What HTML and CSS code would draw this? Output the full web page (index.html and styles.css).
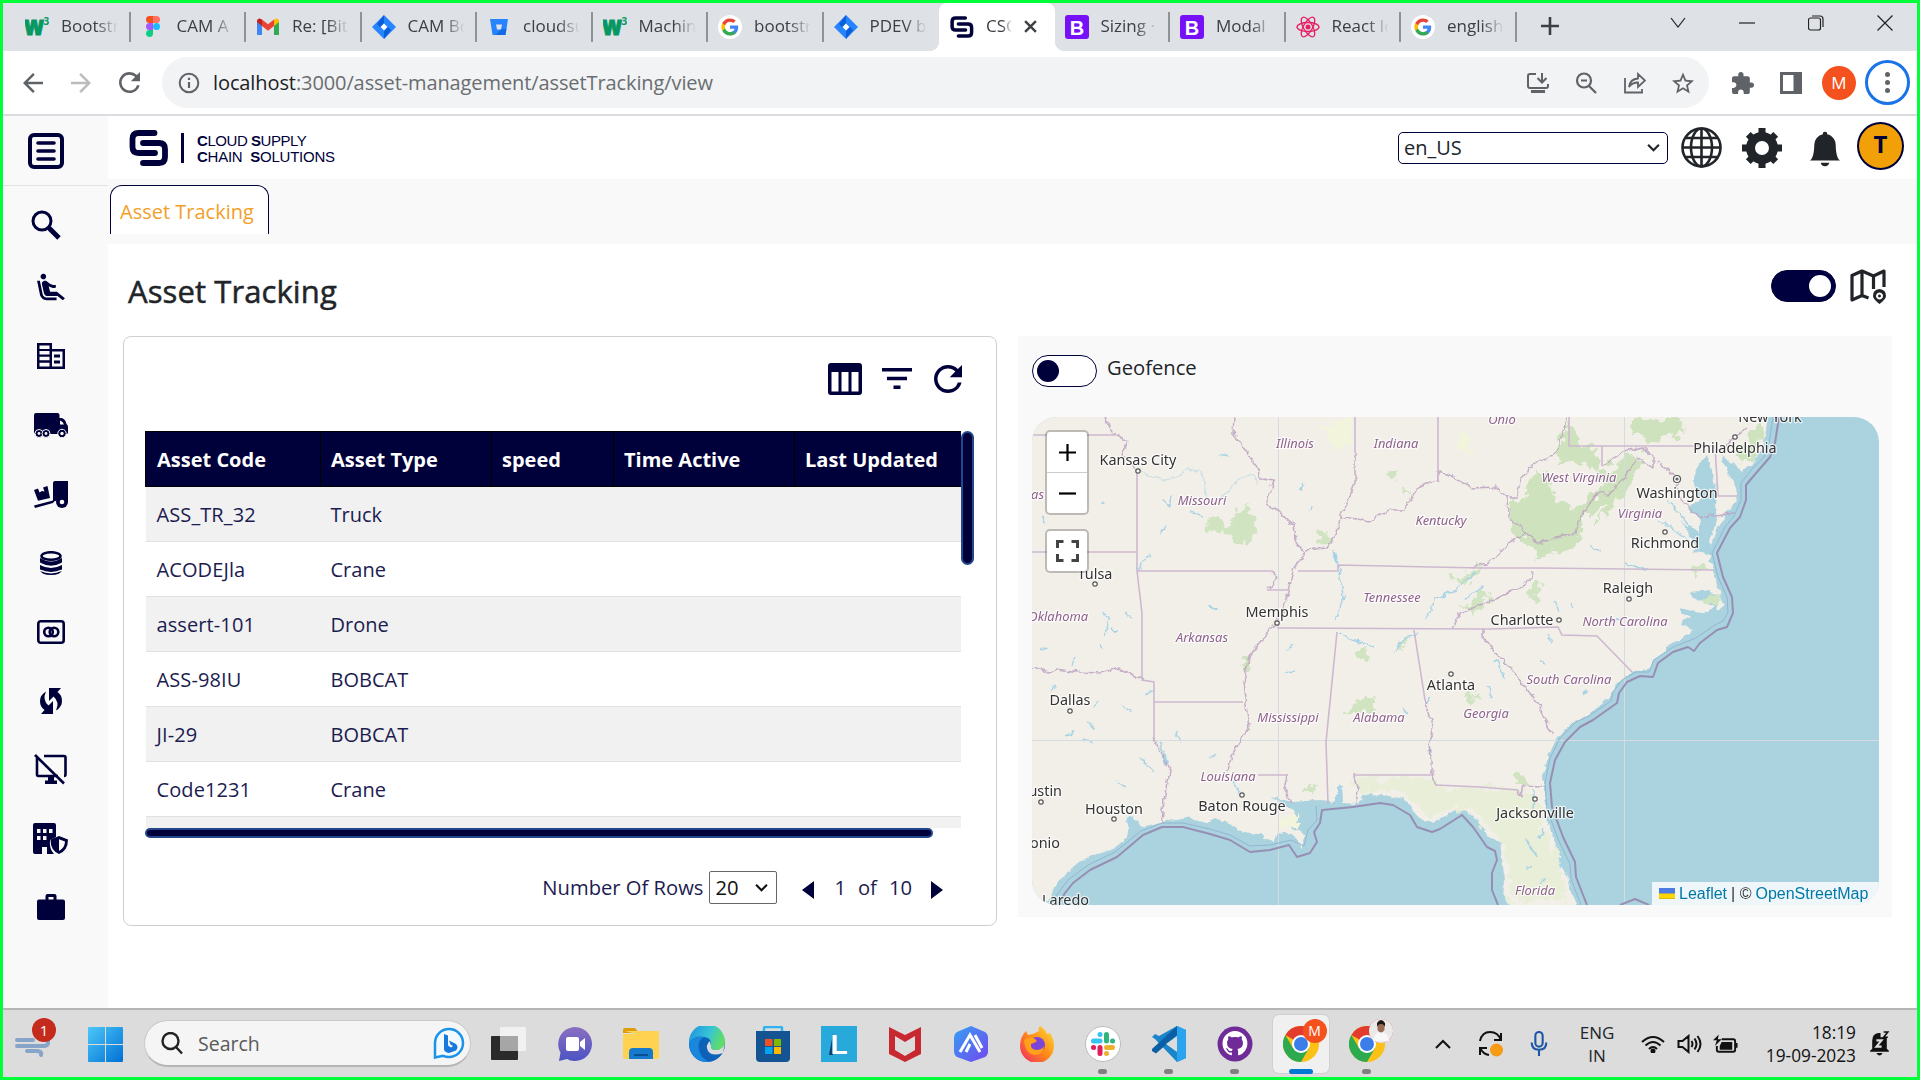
FILE: index.html
```html
<!DOCTYPE html>
<html lang="en">
<head>
<meta charset="utf-8">
<title>Asset Tracking</title>
<link rel="stylesheet" href="styles.css">
</head>
<body>
<svg class="defs" width="0" height="0">
  <defs>
    <symbol id="google" viewBox="0 0 24 24"><circle cx="12" cy="12" r="12" fill="#fff"/><g transform="translate(2.6 2.6) scale(.78)"><path fill="#4285F4" d="M22.56 12.25c0-.78-.07-1.53-.2-2.25H12v4.26h5.92a5.06 5.06 0 0 1-2.2 3.32v2.77h3.57c2.08-1.92 3.27-4.74 3.27-8.1z"/><path fill="#34A853" d="M12 23c2.97 0 5.46-.98 7.28-2.66l-3.57-2.77c-.98.66-2.23 1.06-3.71 1.06-2.86 0-5.29-1.93-6.16-4.53H2.18v2.84A11 11 0 0 0 12 23z"/><path fill="#FBBC05" d="M5.84 14.09a6.6 6.6 0 0 1 0-4.18V7.07H2.18a11 11 0 0 0 0 9.86l3.66-2.84z"/><path fill="#EA4335" d="M12 5.38c1.62 0 3.06.56 4.21 1.64l3.15-3.15C17.45 2.09 14.97 1 12 1A11 11 0 0 0 2.18 7.07l3.66 2.84c.87-2.6 3.3-4.53 6.16-4.53z"/></g></symbol>
    <symbol id="jira" viewBox="0 0 24 24"><path fill="#2684ff" d="M12 0 24 12 12 24 0 12z"/><path fill="#0052cc" d="M12 0v8l-4 4-3-3zM12 24v-8l4-4 3 3z" opacity=".75"/><path fill="#fff" d="m12 8.600 3.400 3.400-3.400 3.400L8.600 12z"/></symbol>
    <symbol id="w3" viewBox="0 0 24 24"><text class="w3-w" x="-1" y="20" textLength="20" lengthAdjust="spacingAndGlyphs">w</text><text class="w3-n" x="18.500" y="10">3</text></symbol>
    <symbol id="boot" viewBox="0 0 24 24"><rect width="24" height="24" rx="3" fill="#7510f7"/><text class="boot-b" x="12" y="19.500">B</text></symbol>
    <symbol id="cs" viewBox="0 0 40 36"><g fill="none" stroke-width="5.800" stroke-linejoin="round" stroke-linecap="round"><path d="M25.500 3H9.500q-6 0-6 6v8q0 6 6 6h16.500"/><path d="M14 13h16q6 0 6 6v8q0 6-6 6H14"/></g></symbol>
    <symbol id="refresh" viewBox="4 4 16 16"><path fill="currentColor" d="M17.650 6.350A7.958 7.958 0 0 0 12 4c-4.420 0-7.990 3.580-7.990 8s3.570 8 7.990 8c3.730 0 6.840-2.550 7.730-6h-2.080A5.990 5.990 0 0 1 12 18c-3.310 0-6-2.690-6-6s2.690-6 6-6c1.660 0 3.140.690 4.220 1.780L13 11h7V4l-2.350 2.350z"/></symbol>
    <symbol id="arrow" viewBox="4 4 16 16"><path fill="currentColor" d="M20 11H7.830l5.590-5.590L12 4l-8 8 8 8 1.410-1.410L7.830 13H20v-2z"/></symbol>
    <symbol id="chev" viewBox="0 0 12 8"><path d="m1 1.500 5 5 5-5" fill="none" stroke="currentColor" stroke-width="2"/></symbol>
    <symbol id="chrome" viewBox="0 0 36 36"><circle cx="18" cy="18" r="18" fill="#fbc116"/><path fill="#e33b2e" d="M18 18 2.400 9A18 18 0 0 1 33.600 9z"/><path fill="#2da94f" d="M2.400 9A18 18 0 0 0 18 36l7.800-13.500L18 18 10.200 22.500z"/><circle cx="18" cy="18" r="9" fill="#fff"/><circle cx="18" cy="18" r="7" fill="#3b7de9"/></symbol>
  </defs>
</svg>

<div class="screen">
  <header class="tabs">
    <div class="tab"><svg class="fav"><use href="#w3"/></svg><span>Bootstr</span></div>
    <div class="tab"><svg class="fav" viewBox="0 0 24 24"><path fill="#f24e1e" d="M12 1v7H8.500a3.500 3.500 0 0 1 0-7z"/><path fill="#ff7262" d="M12 1h3.500a3.500 3.500 0 0 1 0 7H12z"/><path fill="#a259ff" d="M12 8v7H8.500a3.500 3.500 0 0 1 0-7z"/><circle cx="15.500" cy="11.500" r="3.500" fill="#1abcfe"/><path fill="#0acf83" d="M12 15v4a3.500 3.500 0 1 1-3.500-4z"/></svg><span>CAM A</span></div>
    <div class="tab"><svg class="fav" viewBox="0 0 24 24"><path fill="#4285f4" d="M1 6v14h5V10z"/><path fill="#34a853" d="M23 6v14h-5V10z"/><path fill="#fbbc04" d="M18 4.500V11l5-4V5.500a2.500 2.500 0 0 0-4-1.500z"/><path fill="#c5221f" d="M6 4.500V11L1 7V5.500A2.500 2.500 0 0 1 5 4z"/><path fill="#ea4335" d="m6 4.500 6 4.800 6-4.800V11l-6 4.700L6 11z"/></svg><span>Re: [Bit</span></div>
    <div class="tab"><svg class="fav"><use href="#jira"/></svg><span>CAM Bo</span></div>
    <div class="tab"><svg class="fav" viewBox="0 0 24 24"><path fill="#2684ff" fill-rule="evenodd" d="M3 4h18l-2.500 16h-13zM9 9.500l1 5h4l1-5z"/><path fill="#0052cc" d="m14 14.500 5.500-1L18.500 20h-10z" opacity=".5"/></svg><span>cloudsu</span></div>
    <div class="tab"><svg class="fav"><use href="#w3"/></svg><span>Machin</span></div>
    <div class="tab"><svg class="fav"><use href="#google"/></svg><span>bootstr</span></div>
    <div class="tab before"><svg class="fav"><use href="#jira"/></svg><span>PDEV b</span></div>
    <div class="tab active"><svg class="fav navy"><use href="#cs"/></svg><span>CSC</span><svg class="tab-x" viewBox="0 0 12 12"><path d="m1 1 10 10M11 1 1 11" stroke="#3c4043" stroke-width="2.200"/></svg></div>
    <div class="tab"><svg class="fav"><use href="#boot"/></svg><span>Sizing ·</span></div>
    <div class="tab"><svg class="fav"><use href="#boot"/></svg><span>Modal</span></div>
    <div class="tab"><svg class="fav" viewBox="0 0 24 24"><g fill="none" stroke="#e91e63" stroke-width="1.300"><ellipse cx="12" cy="12" rx="11" ry="4.500"/><ellipse cx="12" cy="12" rx="11" ry="4.500" transform="rotate(60 12 12)"/><ellipse cx="12" cy="12" rx="11" ry="4.500" transform="rotate(120 12 12)"/></g><circle cx="12" cy="12" r="2.500" fill="#e91e63"/></svg><span>React Ic</span></div>
    <div class="tab"><svg class="fav"><use href="#google"/></svg><span>english</span></div>
    <svg class="newtab" viewBox="0 0 18 18"><path d="M9 0v18M0 9h18" stroke="#3c4043" stroke-width="2.600"/></svg>
    <div class="winctl">
      <svg viewBox="0 0 16 16"><path d="m1 3 7 9 7-9"/></svg>
      <svg viewBox="0 0 16 16"><path d="M0 8h16"/></svg>
      <svg viewBox="0 0 16 16"><rect x=".500" y="3" width="12" height="12" rx="2"/><path d="M4 1h8q3 0 3 3v8"/></svg>
      <svg viewBox="0 0 16 16"><path d="m.500.500 15 15M15.500.500l-15 15"/></svg>
    </div>
  </header>

  <div class="toolbar">
    <svg class="nav"><use href="#arrow"/></svg>
    <svg class="nav fwd"><use href="#arrow"/></svg>
    <svg class="nav reload"><use href="#refresh"/></svg>
    <div class="omnibox">
      <svg class="info" viewBox="0 0 22 22"><circle cx="11" cy="11" r="9.300" fill="none" stroke="#5f6368" stroke-width="2"/><path d="M11 10v6M11 5.800v2.200" stroke="#5f6368" stroke-width="2.200"/></svg>
      <div class="url"><b>localhost</b>:3000/asset-management/assetTracking/view</div>
      <svg viewBox="0 0 22 22"><g fill="none" stroke="#5f6368" stroke-width="2"><path d="M9 2H3q-2 0-2 2v10q0 2 2 2h16q2 0 2-2v-2M15 1v9m-4.500-4 4.500 4.500L19.500 6"/><path d="M4 19.500h14" stroke-width="3"/></g></svg>
      <svg viewBox="0 0 22 22"><g fill="none" stroke="#5f6368" stroke-width="2.200"><circle cx="9" cy="8.500" r="7"/><path d="m14 14 7 7M6 8.500h6"/></g></svg>
      <svg viewBox="0 0 22 22"><path d="M1 6v14.500h17V17M5 15q1-8 9-8.500V2l7 6.500-7 6.500v-4.500q-6 0-9 4.500z" fill="none" stroke="#5f6368" stroke-width="1.800"/></svg>
      <svg viewBox="2 2 20 19"><path fill="#5f6368" d="M22 9.240l-7.190-.620L12 2 9.190 8.630 2 9.240l5.460 4.730L5.820 21 12 17.270 18.180 21l-1.630-7.030L22 9.240zM12 15.400l-3.760 2.270 1-4.280-3.320-2.880 4.380-.380L12 6.100l1.710 4.040 4.380.380-3.320 2.880 1 4.280L12 15.400z"/></svg>
    </div>
    <svg class="ext" viewBox="2 1 21 21"><path fill="#5f6368" d="M20.500 11H19V7c0-1.100-.9-2-2-2h-4V3.500a2.500 2.500 0 0 0-5 0V5H4c-1.100 0-1.990.9-1.990 2v3.800H3.500c1.490 0 2.700 1.210 2.700 2.700s-1.210 2.700-2.700 2.700H2V20c0 1.100.9 2 2 2h3.800v-1.500c0-1.490 1.210-2.700 2.700-2.700s2.700 1.210 2.700 2.700V22H17c1.100 0 2-.9 2-2v-4h1.500a2.500 2.500 0 0 0 0-5z"/></svg>
    <svg class="panel-ic" viewBox="0 0 22 22"><path fill="#5f6368" fill-rule="evenodd" d="M0 0h22v22H0zM3 3v16h10.500V3z"/></svg>
    <div class="me">M</div>
    <div class="kebab"><i></i><i></i><i></i></div>
  </div>

  <div class="app">
    <nav class="side">
      <div class="side-top"><svg width="36" height="36" viewBox="0 0 36 36"><rect x="2" y="2" width="32" height="32" rx="4" fill="none" stroke="#00003a" stroke-width="4"/><path d="M10 10h16M10 18h16M10 26h16" stroke="#00003a" stroke-width="3.600" stroke-linecap="round"/></svg></div>
      <div class="side-search"><svg width="30" height="30" viewBox="0 0 30 30"><g fill="none" stroke="#00003a"><circle cx="11" cy="11" r="9" stroke-width="3"/><path d="m18 18 10 10" stroke-width="5"/></g></svg></div>
      <div class="side-ic"><svg width="32" height="30" viewBox="0.500 1 23 21"><path d="M5.350 5.640c-.9-.640-1.120-1.880-.490-2.790.630-.9 1.880-1.120 2.790-.490.9.640 1.120 1.880.490 2.790-.640.9-1.880 1.120-2.790.490zM16 19H8.930c-1.480 0-2.740-1.080-2.960-2.540L4 7H2l1.990 9.760C4.370 19.200 6.470 21 8.940 21H16v-2zm.230-4h-4.880l-1.030-4.100c1.580.890 3.280 1.540 5.150 1.220V9.990c-1.630.310-3.440-.270-4.690-1.250L9.140 7.470c-.230-.180-.490-.3-.760-.380a2.210 2.210 0 0 0-.990-.060h-.020a2.268 2.268 0 0 0-1.840 2.610l1.350 5.920A3.008 3.008 0 0 0 9.830 18h6.850l3.820 3 1.500-1.500-5.770-4.500z"/></svg></div>
      <div class="side-ic"><svg width="28" height="26" viewBox="0 0 28 26"><path fill-rule="evenodd" d="M0 0h15v6h13v20H0zM2.500 2.500V6h10V2.500zM2.500 8v3.500h10V8zm0 5.800v3.500h10v-3.500zm0 6v3.700h10v-3.700zM15 8.500v15h10.500v-15z"/><path d="M17 11.500h6v3h-6zm0 6h6v3h-6z"/></svg></div>
      <div class="side-ic"><svg width="34" height="25" viewBox="0 0 34 25"><path fill-rule="evenodd" d="M2 0h21.500q2 0 2 2v3h2q4 1 5 6 1.500 1 1.500 3v5.500q0 1.500-1.500 1.500H2Q0 21 0 19V2Q0 0 2 0zm24 7.500v4h4q-1-3-4-4z"/><g stroke="#f9f9f9" stroke-width="1"><circle cx="5" cy="20.500" r="4"/><circle cx="12" cy="20.500" r="4"/><circle cx="28" cy="20.500" r="4.200"/></g><circle cx="5" cy="20.500" r="1.400" fill="#f9f9f9"/><circle cx="12" cy="20.500" r="1.400" fill="#f9f9f9"/><circle cx="28" cy="20.500" r="1.700" fill="#f9f9f9"/></svg></div>
      <div class="side-ic"><svg width="34" height="27" viewBox="0 0 34 27"><path d="M19 2q0-2 2-2h13v21h-8q-5-3-7 1L1 27l-1-2.500 19-5z"/><path d="m0 9 4-1.500 1.500 4L8 10l2.500.500L9 6.500 13.500 5l2.500 12L4 19.800z"/><circle cx="28" cy="21" r="6"/><circle cx="28" cy="21" r="2.300" fill="#f9f9f9"/></svg></div>
      <div class="side-ic"><svg width="22" height="25" viewBox="0 0 22 25"><ellipse cx="11" cy="5" rx="9.500" ry="3.800" fill="none" stroke="#00003a" stroke-width="2.500"/><path d="M0 7q11 7 22 0v4q-1 4-11 4T0 11zM0 14q11 6 22 0v5q-1 5-11 5T0 19z"/><path d="M0 12.500q11 6 22 0M0 19.200q11 5 22 0" stroke="#f9f9f9" fill="none" stroke-width="1.500"/></svg></div>
      <div class="side-ic"><svg width="28" height="24" viewBox="0 0 28 24"><g fill="none" stroke="#00003a" stroke-width="2.600"><rect x="1.300" y="1.300" width="25.400" height="21.400" rx="2.500"/><circle cx="11.500" cy="12" r="4.300"/><circle cx="17" cy="12" r="4.300"/></g></svg></div>
      <div class="side-ic"><svg width="22" height="26" viewBox="0 0 22 26"><path d="M9 0h12l-3.500 4Q22 7 22 13q0 6-6 9.500Q20 14 13.500 8.500L9 13zM13 26H1l3.500-4Q0 19 0 13q0-6 6-9.500Q2 12 8.500 17.500L13 13z"/></svg></div>
      <div class="side-ic"><svg width="33" height="31" viewBox="0 0 33 31"><g fill="none" stroke="#00003a" stroke-width="2.600"><path d="M10 2h20q1.500 0 1.500 1.500v17Q31.500 22 30 22M3 4v16.500Q3 22 4.500 22H24"/><path d="m1 1 29 28.500"/></g><path d="M14 22h6v4.500h3V30H11v-3.500h3z"/></svg></div>
      <div class="side-ic"><svg width="35" height="31" viewBox="0 0 35 31"><path fill-rule="evenodd" d="M2 0h19q2 0 2 2v12l-6 3q-1 9 4 14h-7v-7H9v7H2q-2 0-2-2V2Q0 0 2 0zm2 6v4h3.500V6zm6 0v4h3.500V6zm6 0v4h3.500V6zM4 13v4h3.500v-4zm6 0v4h3.500v-4z"/><path fill-rule="evenodd" d="m26 13 9 3.500q0 11-9 14.500-8.500-3.500-8.500-14.500zm0 3.300V28q6-3.500 6-9.500z"/></svg></div>
      <div class="side-ic"><svg width="28" height="26" viewBox="0 0 28 26"><path fill-rule="evenodd" d="M8.500 5.500V2q0-2 2-2h7q2 0 2 2v3.500H26q2 0 2 2V24q0 2-2 2H2q-2 0-2-2V7.500q0-2 2-2zm3 0h5V3h-5z"/></svg></div>
    </nav>

    <main class="main">
      <div class="head">
        <svg class="logo"><use href="#cs"/></svg>
        <div class="logo-bar"></div>
        <div class="logo-text"><div class="l1"><b>C</b>LOUD <b>S</b>UPPLY</div><div class="l2"><b>C</b>HAIN&nbsp; <b>S</b>OLUTIONS</div></div>
        <div class="locale"><span>en_US</span><svg width="13" height="9"><use href="#chev"/></svg></div>
        <svg class="globe" viewBox="0 0 41 41"><g fill="none" stroke="#212529" stroke-width="2.600"><circle cx="20.500" cy="20.500" r="19"/><ellipse cx="20.500" cy="20.500" rx="10.500" ry="19"/><path d="M20.500 1.500v38M1.500 20.500h38M5 11h31M5 30h31"/></g></svg>
        <svg class="gear" viewBox="-20 -20 40 40"><g fill="none" stroke="#212529"><circle r="11.500" stroke-width="9"/><path d="M0-20v8M0 12v8M-20 0h8M12 0h8" stroke-width="7"/><path d="M0-20v8M0 12v8M-20 0h8M12 0h8" stroke-width="7" transform="rotate(45) scale(.97)"/></g></svg>
        <svg class="bell" viewBox="1 0 14 16"><path fill="#212529" d="M8 16a2 2 0 0 0 2-1.600H6A2 2 0 0 0 8 16zm.995-14.901a1 1 0 1 0-1.990 0A5.002 5.002 0 0 0 3 6c0 1.098-.100 6-2 7.400h14c-1.900-1.400-2-6.302-2-7.400 0-2.420-1.720-4.440-4.005-4.901z"/></svg>
        <div class="avatar">T</div>
      </div>
      <div class="crumbs"><div class="crumb">Asset Tracking</div></div>
      <div class="title-row">
        <h1>Asset Tracking</h1>
        <div class="switch on"><i></i></div>
        <svg class="mapic" viewBox="0 0 36 35"><g fill="none" stroke="#212529" stroke-width="3.200" stroke-linejoin="round"><path d="M34 18V2l-10.500 5L12 2 2 6.500V31l10-4.500 6.500 2.500M12 2v24M23.500 7v13"/></g><path fill="#212529" fill-rule="evenodd" d="M29.500 20q6.500.500 6.500 7 0 3-6.500 8-6.500-5-6.500-8 0-6.500 6.500-7zm0 3.500a3.500 3.500 0 1 0 .010 0zM29.500 25.500a1.500 1.500 0 1 1-.010 0z"/></svg>
      </div>
      <div class="cards">
        <section class="card">
          <div class="tools">
            <svg width="34" height="32" viewBox="0 0 34 32"><path fill="currentColor" fill-rule="evenodd" d="M3 0h28q3 0 3 3v26q0 3-3 3H3q-3 0-3-3V3q0-3 3-3zm.500 9v19.500h7V9zm10 0v19.500h7V9zm10 0v19.500h7V9z"/></svg>
            <svg width="30" height="21" viewBox="0 0 30 21"><path d="M0 1.800h30M5 10.500h20M11.500 19.300h7" stroke="currentColor" stroke-width="3.400"/></svg>
            <svg width="28" height="28"><use href="#refresh"/></svg>
          </div>
          <div class="scroll">
            <div class="viewport">
              <table>
                <colgroup><col class="c1"><col class="c2"><col class="c3"><col class="c4"><col class="c5"></colgroup>
                <thead><tr><th>Asset Code</th><th>Asset Type</th><th>speed</th><th>Time Active</th><th>Last Updated</th></tr></thead>
                <tbody>
                  <tr><td>ASS_TR_32</td><td>Truck</td><td></td><td></td><td></td></tr>
                  <tr><td>ACODEJla</td><td>Crane</td><td></td><td></td><td></td></tr>
                  <tr><td>assert-101</td><td>Drone</td><td></td><td></td><td></td></tr>
                  <tr><td>ASS-98IU</td><td>BOBCAT</td><td></td><td></td><td></td></tr>
                  <tr><td>JI-29</td><td>BOBCAT</td><td></td><td></td><td></td></tr>
                  <tr><td>Code1231</td><td>Crane</td><td></td><td></td><td></td></tr>
                  <tr><td></td><td></td><td></td><td></td><td></td></tr>
                </tbody>
              </table>
            </div>
            <div class="vbar"></div>
            <div class="hbar"></div>
          </div>
          <div class="pager">
            <span class="rows">Number Of Rows</span>
            <div class="rowsel"><span>20</span><svg width="13" height="9"><use href="#chev"/></svg></div>
            <svg class="prev" width="12" height="18" viewBox="0 0 12 18"><path d="M12 0v18L0 9z"/></svg>
            <span class="p1">1</span><span class="p2">of</span><span class="p3">10</span>
            <svg class="next" width="12" height="18" viewBox="0 0 12 18"><path d="M0 0v18l12-9z"/></svg>
          </div>
        </section>

        <section class="geo">
          <div class="geo-head"><div class="switch"><i></i></div><span>Geofence</span></div>
          <div class="map">
            <svg class="map-svg" viewBox="1032 417 847 488">
              <defs>
                <filter id="rough" x="-5%" y="-5%" width="110%" height="110%"><feTurbulence type="fractalNoise" baseFrequency=".12" numOctaves="3" seed="4"/><feDisplacementMap in="SourceGraphic" scale="7" xChannelSelector="R" yChannelSelector="G"/></filter>
                <filter id="wood" x="-10%" y="-10%" width="120%" height="120%"><feTurbulence type="fractalNoise" baseFrequency=".09" numOctaves="4" seed="9"/><feDisplacementMap in="SourceGraphic" scale="22" xChannelSelector="R" yChannelSelector="G"/></filter>
              </defs>
              <rect x="1032" y="417" width="847" height="488" fill="#aad3df"/>
              <path filter="url(#rough)" fill="#f2efe9" d="M1020 405H1770L1768 417 1763 447 1753 463 1742 473 1740 467 1730 463 1722 455 1727 470 1735 483 1738 497 1727 513 1718 527 1712 545 1709 540 1717 520 1715 503 1717 490 1712 470 1707 455 1697 467 1693 480 1700 500 1687 508 1702 520 1698 533 1680 520 1697 545 1695 552 1710 555 1712 570 1720 593 1723 605 1716 612 1718 598 1710 590 1690 592 1698 600 1714 606 1708 613 1678 608 1690 617 1680 624 1693 631 1673 643 1657 657 1650 668 1630 673 1617 683 1610 697 1593 712 1572 723 1558 738 1548 757 1543 773 1543 793 1548 820 1557 847 1565 873 1572 890 1580 915H1509L1507 905 1502 887 1505 880 1502 860 1500 842 1487 835 1477 820 1467 812 1455 810 1440 819 1430 823 1418 817 1413 807 1400 798 1380 795 1363 796 1357 804 1342 803 1341 785 1338 786 1336 802 1320 800 1293 802 1270 797 1287 806 1297 815 1285 824 1307 835 1303 848 1292 834 1277 832 1273 843 1258 834 1243 832 1230 825 1215 818 1207 823 1187 818 1160 822 1143 827 1130 818 1127 838 1110 850 1080 860 1067 873 1053 887 1044 915H1020z"/>
              <g filter="url(#wood)">
                <path fill="#e6eed3" d="M1353 778H1432L1438 788H1518L1536 800 1545 830 1560 860 1568 900H1510L1508 850 1488 826 1466 806 1440 815 1424 812 1400 792 1358 790z" opacity=".8"/>
                <path fill="#cde2bd" d="M1567 420l-8 36-28 20-8 22-14 6 4 26 14 14 20 8 28-8 10-22 16-22 14 4 16-26 12-18-2-8-20 8-22 16-4-30-16-4z"/>
                <path fill="#f2efe9" d="M1545 456l25 2 26 14 6 14-28 22-18-8-6-16-10-14z"/>
                <path fill="#cde2bd" d="M1606 500l26-36 8 2-20 34-26 24zM1536 548l30-8 10 2-34 16zM1632 418h46l10 12-30 10-26-6zM1750 430l12-8-4 32-12 10-8-6z"/>
                <path fill="#d0e4c1" d="M1206 520l18-2 4 12-14 4zM1243 508l10 6 4 18-10 12-24-8 8-14zM1318 532l10-6 2 14-8 6zM1462 606l20-14 8 4-18 12zM1452 580l28-16 0 6-20 16zM1468 602l22 0-16 10zM1528 590l14-10-2 14-8 6z"/>
                <path fill="#d0e4c1" d="M1354 650l14-2-2 12-8 0zM1354 702l16-8 4 14-16 6-12 2zM1240 656l8 2-2 10-6-2zM1398 640l6 0 2 6-6 0zM1512 774h12v10h-12zM1470 692l8 4-4 8-8-4zM1302 792l14-10-2 10zM1694 560l10 10-8 6zM1706 596l12-2-2 10-12-2zM1390 468l6 0-2 10-6-2zM1404 488l4 4-2 6z"/>
                <path fill="#f3f4dc" d="M1320 424l30-4 0 30-20-6zM1455 434l18 0-6 20-12-8zM1284 820l16-6-4 14-14 0z"/>
              </g>
              <g filter="url(#rough)" fill="none" stroke="#a8d3e6" stroke-width="1.400">
                <path d="M1141 470q18 18 40 4t24 14 24 2 28-6" opacity=".5"/>
                <path d="M1162 500l8 6 2-10M1190 512l14 4M1160 535l6-10M1218 454l10 2M1300 490l4-8M1310 512l1-6M1150 555l-12 14M1208 605l8 4M1103 610l6 10-4 14M1126 612l6 8M1110 628l8 4M1040 650l8-2M1088 720l6 10M1082 740l10 2M1140 758l14 14M1176 733l4 10M1210 760l6-6M1118 782l8 6M1154 690l-8 4M1066 736l8-4M1120 705l12 6M1050 690l5-5M1098 700l-5 8"/>
                <path d="M1333 550l6 20 4 26-8 26M1338 632l14 8 22 6M1394 652l10-14 14-4M1426 620l10-22 20-8 20-18M1160 742l6 20M1232 780l8 12M1464 600l20-14M1286 650l8-6M1286 671l9 1M1426 705l4-8M1496 660l10 18M1540 662l6 2M1555 600l4 12M1404 706l4 8M1430 745l-1 10M1534 790l-1 20M1532 852l-5-12 10 18M1526 870l5-5M1544 828l-2 8M1545 878l-5 5M1488 685l4 12M1548 635l3 8M1570 602l2 6M1612 620l8 2M1590 545l10 6M1626 563l22 8M1668 500l24 28M1660 520l30 20M1100 646l2 4M1072 665l3-8M1047 522l-4-6M1102 502l3 1"/>
                <path stroke-width="4" d="M1334 553l4 12M1340 786l1 16M1128 826l4-10M1560 858l3 10M1584 691l2 3M1540 834l-1 3M1164 756l2 8"/>
              </g>
              <g stroke="#d5dbe0" stroke-width="1"><path d="M1278.500 417V905M1624.500 417V905M1032 740.500H1879"/></g>
              <g filter="url(#rough)" fill="none" stroke="#bda3c1" stroke-width="1.500" opacity=".85">
                <path d="M1105 417 1107 423 1116 435 1128 442 1122 453 1137 470M1234 417 1233 433 1257 467 1260 478 1274 480 1267 502 1293 525 1295 540 1305 553 1293 570 1288 597 1277 623 1263 637 1248 660 1243 683 1249 727 1233 753 1228 770M1355 453 1355 483 1340 517 1337 533 1327 548 1305 550M1340 517 1368 522 1390 510 1403 510 1420 485 1438 480 1440 470 1453 477 1473 488 1495 487 1507 497 1518 497 1520 480 1533 465 1557 452 1567 417M1507 498 1508 515 1525 533 1537 543 1575 533 1580 517 1598 492 1608 497 1627 473 1637 457 1653 468 1653 457 1643 448 1623 452 1602 466M1657 462 1677 477 1680 500 1700 517 1715 516 1735 513M1525 533 1500 550 1493 560 1473 568M1533 570 1532 580 1500 597 1460 613 1453 628M1483 628 1483 638 1518 677 1540 707 1542 713 1553 735M1032 668 1050 672 1058 669 1077 672 1100 673 1120 668 1142 680M1154 738 1169 770 1164 800 1162 824M1425 700 1433 727 1429 743 1432 773 1436 785M1518 790 1520 798 1523 785 1542 786M1353 775 1358 790 1356 804M1288 775 1285 790 1292 803M1273 571 1277 578 1267 590M1748 428 1735 437 1722 450"/>
              </g>
              <g fill="none" stroke="#cdb9cf" stroke-width="1.600">
                <path d="M1032 435H1116M1137 470V571L1142 613V680L1154 682V738M1032 552H1137M1137 571H1273M1267 590H1288M1355 417V453M1438 417V480M1569 417V446H1715L1718 496H1738M1602 446V466M1298 571H1338V565L1480 568H1535L1713 570M1277 628 1480 629H1490M1490 629 1558 627 1562 635 1597 636 1632 672M1337 632 1326 742 1328 804M1414 630 1425 700M1154 702H1243M1436 785 1480 787 1518 790M1353 775H1432M1258 775H1288"/>
              </g>
              <g fill="none" stroke-linejoin="round">
                <g stroke="#968fb3" stroke-width="2">
                  <path d="M1779 417 1775 443 1770 457 1757 472 1746 485V500L1740 517 1730 528 1717 553 1723 577 1732 597 1733 613 1727 627 1717 630 1700 643 1694 651 1688 647 1673 652 1658 663 1653 677 1640 676 1627 682 1619 693 1617 703 1593 720 1580 727 1565 742 1555 760 1550 783 1552 807 1563 837 1575 862 1576 877 1587 905"/>
                  <path d="M1498 905 1492 890V873L1497 860 1495 851 1487 847 1473 827 1462 815 1440 829 1432 832 1417 827 1410 815 1393 805 1380 803 1353 807 1322 810 1320 823 1314 832 1317 842 1310 853 1297 857 1289 845 1270 850 1250 852 1230 840 1210 834 1183 827 1162 827 1143 835 1117 857 1090 870 1073 883 1065 893 1058 905M1620 905 1635 899 1649 905"/>
                </g>
                <path d="M1773 417 1769 443 1764 457 1752 469 1741 483V500L1734 516 1725 527 1712 553 1718 577 1727 597 1728 613 1723 621 1715 625 1696 638 1673 647 1654 660 1649 672 1636 672 1622 680 1613 692 1611 701 1589 716 1576 722 1560 738 1550 758 1545 783 1547 809 1558 839 1570 864 1571 879 1581 905M1316 806 1317 820 1308 830 1304 846 1291 840 1270 845 1250 846 1230 835 1210 829 1183 823 1162 823 1141 831 1115 852 1088 865 1068 880 1053 900" stroke="#93b5d2" stroke-width="1"/>
              </g>
              <g class="dots">
                <circle cx="1138" cy="471" r="2.200"/><circle cx="1095" cy="584" r="2.200"/><circle cx="1277" cy="623" r="2.200"/><circle cx="1735" cy="437" r="2.200"/><circle cx="1677" cy="479" r="3.500"/><circle cx="1677" cy="479" r="1"/><circle cx="1665" cy="532" r="2.200"/><circle cx="1629" cy="599" r="2.200"/><circle cx="1559" cy="620" r="2.200"/><circle cx="1451" cy="674" r="2.200"/><circle cx="1070" cy="711" r="2.200"/><circle cx="1041" cy="802" r="2.200"/><circle cx="1114" cy="819" r="2.200"/><circle cx="1242" cy="795" r="2.200"/><circle cx="1535" cy="799" r="2.200"/>
              </g>
              <g class="state">
                <text x="1295" y="448">Illinois</text><text x="1396" y="448">Indiana</text><text x="1202" y="505">Missouri</text><text x="1441" y="525">Kentucky</text><text x="1392" y="602">Tennessee</text><text x="1202" y="642">Arkansas</text><text class="end" x="1088" y="621">Oklahoma</text><text class="end" x="1044" y="499">Kansas</text><text x="1502" y="424">Ohio</text><text x="1579" y="482">West Virginia</text><text x="1640" y="518">Virginia</text><text x="1625" y="626">North Carolina</text><text x="1569" y="684">South Carolina</text><text x="1486" y="718">Georgia</text><text x="1288" y="722">Mississippi</text><text x="1379" y="722">Alabama</text><text x="1228" y="781">Louisiana</text><text x="1535" y="895">Florida</text>
              </g>
              <g class="city">
                <text x="1138" y="465">Kansas City</text><text x="1095" y="579">Tulsa</text><text x="1277" y="617">Memphis</text><text x="1735" y="453">Philadelphia</text><text x="1770" y="422">New York</text><text x="1677" y="498">Washington</text><text x="1665" y="548">Richmond</text><text x="1628" y="593">Raleigh</text><text x="1522" y="625">Charlotte</text><text x="1451" y="690">Atlanta</text><text x="1070" y="705">Dallas</text><text class="end" x="1062" y="796">Austin</text><text x="1114" y="814">Houston</text><text class="end" x="1060" y="848">San Antonio</text><text class="end" x="1089" y="905">Laredo</text><text x="1242" y="811">Baton Rouge</text><text x="1535" y="818">Jacksonville</text>
              </g>
            </svg>
            <div class="map-ctl">
              <div class="zoom"><div><svg viewBox="0 0 17 17"><path d="M8.500 0v17M0 8.500h17"/></svg></div><div><svg viewBox="0 0 17 17"><path d="M0 8.500h17"/></svg></div></div>
              <div class="full"><svg width="23" height="22" viewBox="0 0 23 22"><path d="M1.500 8V1.500h6M15.500 1.500h6V8M21.500 14v6.500h-6M7.500 20.500h-6V14" fill="none" stroke="#444" stroke-width="3"/></svg></div>
            </div>
            <div class="attr"><svg width="16" height="11"><path fill="#4c7be1" d="M0 0h16v6H0z"/><path fill="#ffd500" d="M0 5.500h16V11H0z"/><path fill="#e0bc00" d="M0 10h16v1H0z"/></svg><a>Leaflet</a> | © <a>OpenStreetMap</a></div>
          </div>
        </section>
      </div>
    </main>
  </div>

  <footer class="task">
    <div class="wx"><svg width="36" height="30" viewBox="0 0 36 30"><g fill="none" stroke="#86a5c8" stroke-width="4" stroke-linecap="round"><path d="M2 11h16M2 17h26q6 0 5-5-1-3-4-3M12 22h10q5 0 4 4"/></g></svg><b>1</b></div>
    <svg class="win" viewBox="0 0 35 35"><defs><linearGradient id="wg" x1="0" y1="0" x2="1" y2="1"><stop offset="0" stop-color="#4cc8fa"/><stop offset="1" stop-color="#0070d4"/></linearGradient></defs><path fill="url(#wg)" d="M1 0h16v17H0V1q0-1 1-1zM18 0h16q1 0 1 1v16H18zM0 18h17v17H1q-1 0-1-1zM18 18h17v16q0 1-1 1H18z"/></svg>
    <div class="search"><svg width="23" height="23" viewBox="0 0 23 23"><g fill="none" stroke="#222" stroke-width="2.400"><circle cx="10.500" cy="9" r="8"/><path d="m16 15 6 6.500"/></g></svg><span>Search</span><svg class="bing" width="32" height="32" viewBox="0 0 32 32"><path d="M2 30.500V16A14 14 0 1 1 16 30q-3 0-6-1.200z" fill="#f3faff" stroke="#1a93e8" stroke-width="2.500"/><path d="m11 7 4 1.500v10l3 2 2-1.500-2.500-1.500-1.500-4 7 3.500q3 3 0 6.500L16 26q-5-1-5-4z" fill="#1878dc"/></svg></div>
    <div class="apps">
      <div><svg viewBox="0 0 36 36"><rect x="0" y="10" width="27" height="24" rx="1" fill="#2a2a2a"/><rect x="9" y="1" width="26" height="24" rx="1" fill="#f4f4f4" opacity=".88"/><path fill="#999" d="M9 10h18v15H9z" opacity=".8"/></svg></div>
      <div><svg viewBox="0 0 36 36"><defs><linearGradient id="tg" x1="0" y1="0" x2="0" y2="1"><stop offset="0" stop-color="#8b6fc0"/><stop offset="1" stop-color="#4b53c4"/></linearGradient></defs><path fill="url(#tg)" d="M18 1a17 17 0 1 1-8 32L2 35l1.500-8.500A17 17 0 0 1 18 1z"/><rect x="9" y="11" width="13" height="14" rx="2" fill="#fff"/><path fill="#fff" d="m23 16 5-4v12l-5-4z"/></svg></div>
      <div><svg viewBox="0 0 36 36"><path fill="#dd9d0b" d="M0 4q0-2 2-2h10l4 5H0z"/><path fill="#ffd252" d="M2 5h33q1 0 1 2v24q0 2-2 2H2q-2 0-2-2V8h13z"/><path fill="#1579cc" d="M6 33v-7q0-4 4-4h16q4 0 4 4v7z"/><path stroke="#084f94" stroke-width="2" d="M11 29h14"/></svg></div>
      <div><svg viewBox="0 0 36 36"><defs><linearGradient id="eg" x1="0" y1="0" x2="1" y2=".3"><stop offset="0" stop-color="#1d8fe0"/><stop offset=".6" stop-color="#35c3d8"/><stop offset="1" stop-color="#5fdc6c"/></linearGradient></defs><circle cx="18" cy="18" r="18" fill="#0c62b8"/><path fill="url(#eg)" d="M0 17A18 18 0 0 1 36 15q0 9-9 9-7 0-5-5 1-7-7-8Q4 10 0 17z"/><path fill="#dcdcdc" d="M21 15q-5 4-2 10 4 6 15 2l2-10q-2 7-9 7-6 0-5-4z"/><path fill="#1a86dd" d="M0 17q6-9 15-6-7 4-5 13 2 8 10 12Q2 37 0 17z"/></svg></div>
      <div><svg viewBox="0 0 36 36"><path d="M9 8V2q0-1 1-1h16q1 0 1 1v6" fill="none" stroke="#2fb4f0" stroke-width="2.500"/><path fill="#155493" d="M1 5h34v27q0 4-4 4H5q-4 0-4-4z"/><path fill="#f25022" d="M10 13h7.500v7H10z"/><path fill="#7fba00" d="M19 13h7v7h-7z"/><path fill="#00a4ef" d="M10 21h7.500v7H10z"/><path fill="#ffb900" d="M19 21h7v7h-7z"/></svg></div>
      <div><svg viewBox="0 0 36 36"><path fill="#27aadb" d="M0 0h36v36H0z"/><path fill="#123c66" d="M12 7v22h-4z"/><text class="lnv" x="18" y="28">L</text></svg></div>
      <div><svg viewBox="0 0 36 36"><path fill="#c8282f" fill-rule="evenodd" d="m2 1 16 8L34 1v27l-16 8-16-8zm6 9v14l10 6 10-6V10l-10 6z"/></svg></div>
      <div><svg viewBox="0 0 36 36"><defs><linearGradient id="ag" x1="0" y1="0" x2="1" y2="1"><stop offset="0" stop-color="#35a0f4"/><stop offset="1" stop-color="#7346ee"/></linearGradient></defs><path fill="url(#ag)" d="m18 0 14 6q3 2 3 6v13q0 4-3 6l-14 5-14-5q-3-2-3-6V12q0-4 3-6z"/><path d="M7 26 17 9l10 17M13 26l4-8M22 9l7 13" fill="none" stroke="#fff" stroke-width="3"/></svg></div>
      <div><svg viewBox="0 0 36 36"><defs><linearGradient id="fg" x1="1" y1="0" x2="0" y2="1"><stop offset="0" stop-color="#ffe03a"/><stop offset=".5" stop-color="#ff8a16"/><stop offset="1" stop-color="#f0246a"/></linearGradient></defs><path fill="url(#fg)" d="M21 0q6 4 7 8l3-1q4 6 4 13a17 17 0 0 1-34 0q0-9 6-15l2 4 5-1 6-3q-1-3 1-5z"/><circle cx="18" cy="19" r="8" fill="#7a45d8"/><path fill="#ff9f1c" d="M5 14q7-6 13 1-2 2-6 3-1 5 5 6 6 0 8-4-1 9-9 9Q6 28 5 14z"/></svg></div>
      <div class="run"><svg viewBox="0 0 36 36"><circle cx="18" cy="18" r="17.500" fill="#fff" stroke="#bbb"/><g stroke-width="5" stroke-linecap="round"><path stroke="#36c5f0" d="M15 8.500v.1M8.500 15h6.500"/><path stroke="#2eb67d" d="M21.500 8.500v6.500M27.500 15h.1"/><path stroke="#ecb22e" d="M21.500 21.500h6M21.500 27.500v.1"/><path stroke="#e01e5a" d="M15 21.500v6M8.500 21.500h.1"/></g></svg></div>
      <div class="run"><svg viewBox="0 0 36 36"><path fill="#0f7fc9" d="m26 0 9 4v28l-9 4L4 13l-3-2 3-3 4 2z" opacity=".95"/><path fill="#0a5fa5" d="M26 0v9L5 27.500 1 25v-2z"/><path fill="#dcdcdc" d="M26 10v16l-11-8z"/><path fill="#2aa4ee" d="m26 0 9 4v28l-9 4z"/></svg></div>
      <div class="run"><svg viewBox="0 0 36 36"><circle cx="18" cy="18" r="17.500" fill="#6f2c98"/><g transform="translate(5.500 5) scale(1.560)"><path fill="#fff" d="M8 0C3.580 0 0 3.580 0 8c0 3.540 2.290 6.530 5.470 7.590.4.070.550-.170.550-.380 0-.190-.010-.820-.010-1.490-2.010.370-2.530-.490-2.690-.940-.090-.230-.480-.940-.820-1.130-.280-.150-.680-.520-.010-.530.630-.010 1.080.580 1.230.820.720 1.210 1.870.870 2.330.660.070-.520.280-.870.510-1.070-1.780-.2-3.640-.890-3.640-3.950 0-.870.310-1.590.820-2.150-.080-.2-.360-1.020.080-2.120 0 0 .670-.210 2.200.820.640-.180 1.320-.270 2-.270.680 0 1.360.090 2 .270 1.530-1.040 2.200-.820 2.200-.820.440 1.100.160 1.920.080 2.120.510.560.820 1.270.820 2.150 0 3.070-1.870 3.750-3.650 3.950.290.250.540.730.540 1.480 0 1.070-.010 1.930-.010 2.200 0 .210.150.460.550.380A8.013 8.013 0 0 0 16 8c0-4.420-3.580-8-8-8z"/></g></svg></div>
      <div class="run cur"><svg><use href="#chrome"/></svg><em>M</em></div>
      <div class="run"><svg><use href="#chrome"/></svg><em class="photo"><svg viewBox="0 0 24 24"><circle cx="12" cy="12" r="12" fill="#e9e9ea"/><path fill="#f8f8f8" d="M4 22q1-9 8-9t8 9z"/><path fill="#9b6a55" d="M8.500 5h7v6q-3.500 5-7 0z"/><path fill="#1d1816" d="M8 8V4q4-6 8 0v4q-1-3-4-3T8 8z"/></svg></em></div>
    </div>
    <div class="tray">
      <svg class="up" viewBox="0 0 16 10"><path d="m1 9 7-7 7 7"/></svg>
      <svg class="sync" viewBox="0 0 26 26"><path d="M2 10Q4 1 12 1t11 8M23 2v7h-7M2 24v-7h7M2 17q3 6 9 7"/><circle cx="18.500" cy="19" r="6.500" fill="#f79b16" stroke="none"/></svg>
      <svg class="mic" viewBox="0 0 16 24"><g stroke="#1c55a5"><rect x="4.500" y="1" width="7" height="14" rx="3.500"/><path d="M1 11q0 7 7 7t7-7M8 18v6"/></g></svg>
      <div class="lang">ENG<br>IN</div>
      <svg class="wifi" viewBox="0 0 24 18"><path d="M1 7q11-10 22 0M4.500 10.500q7.500-7 15 0M8 14q4-4 8 0"/><circle cx="12" cy="16" r="1.500" fill="#111"/></svg>
      <svg class="vol" viewBox="0 0 24 20"><path d="M1 7h4l6-5v16l-6-5H1zM14 7q2 3 0 6M17 4.500q4 5.500 0 11M20 2q6 8 0 16"/></svg>
      <svg class="bat" viewBox="0 0 26 20"><path d="M9 5h12q2 0 2 2v9q0 2-2 2H6q-2 0-2-2v-4M24.500 9v5"/><path d="M9 8h11v8H7v-4z" fill="#111" stroke="none"/><path d="M6 0 0 6h4L2 12l7-7H5z" fill="#111" stroke="none"/></svg>
      <div class="clock">18:19<br>19-09-2023</div>
      <svg class="dnd" viewBox="0 0 20 24"><path fill="#111" stroke="none" d="M3 17V9q0-6 6-7h2v4h6v11l2 2v1H1v-1zM7 21h6q-3 5-6 0z"/><path d="M7 9h5l-5 6h5" stroke="#ddd"/><path d="M14 1h4l-4 5h4" stroke-width="1.500"/></svg>
    </div>
  </footer>
</div>
</body>
</html>
```
FILE: styles.css
```css
* { box-sizing: border-box; }
body { margin: 0; font-family: "Open Sans", "Noto Sans", sans-serif; color: #212529; }
svg { display: block; flex: none; }
.defs { position: absolute; }

.screen { width: 1920px; height: 1080px; border: 3px solid #00ff38; background: #fff; display: flex; flex-direction: column; overflow: hidden; }

/* browser tabs */
.tabs { height: 48px; flex: none; background: #dee1e6; display: flex; align-items: center; padding-left: 12px; }
.tab { width: 115.500px; flex: none; height: 30px; padding-left: 10px; display: flex; align-items: center; border-right: 2px solid #8f9297; }
.tab span { margin-left: 12px; width: 58px; overflow: hidden; white-space: nowrap; font-size: 17px; line-height: 28px; height: 30px; color: #3c4043; -webkit-mask-image: linear-gradient(90deg, #000 60%, transparent 98%); mask-image: linear-gradient(90deg, #000 60%, transparent 98%); }
.fav { width: 24px; height: 24px; }
.tab .fav { margin-top: -1px; }
.navy { stroke: #00003a; }
.tab.before { border-right-color: transparent; }
.tab.active { position: relative; height: 48px; background: #fff; border-right: 0; border-radius: 8px 8px 0 0; padding-left: 11px; }
.tab.active::before, .tab.active::after { content: ""; position: absolute; bottom: 0; width: 10px; height: 10px; }
.tab.active::before { left: -10px; background: radial-gradient(circle at 0 0, transparent 10px, #fff 10.500px); }
.tab.active::after { right: -10px; background: radial-gradient(circle at 100% 0, transparent 10px, #fff 10.500px); }
.tab.active span { width: 27px; }
.tab-x { width: 13px; height: 13px; margin-left: 11px; margin-top: -2px; }
.w3-w { font: 900 27px "Open Sans", sans-serif; fill: #059862; stroke: #059862; }
.w3-n { font: bold 10px "Open Sans", sans-serif; fill: #059862; }
.boot-b { font: bold 20px "Liberation Sans", sans-serif; fill: #fff; text-anchor: middle; }
.newtab { width: 18px; height: 18px; margin: -2px 0 0 24px; }
.winctl { margin: 0 24px 9px auto; display: flex; gap: 53px; }
.winctl svg { width: 16px; height: 16px; fill: none; stroke: #222; stroke-width: 1.200; }

/* address bar */
.toolbar { height: 65px; flex: none; border-bottom: 2px solid #dadce0; display: flex; align-items: center; padding-left: 20px; }
.nav { width: 20px; height: 20px; color: #5f6368; }
.fwd { margin-left: 28px; transform: scaleX(-1); color: #babcbe; }
.reload { width: 21px; height: 21px; margin-left: 28px; }
.omnibox { margin-left: 22px; width: 1547px; height: 51px; border-radius: 26px; background: #f1f3f4; display: flex; align-items: center; gap: 26.300px; padding: 0 15px 0 16px; }
.omnibox svg { width: 22px; height: 22px; }
.url { font-size: 20px; letter-spacing: -.1px; color: #6a6d71; flex: 1; margin-left: -13.300px; white-space: nowrap; }
.url b { font-weight: 400; color: #202124; }
.ext { width: 22px; height: 24px; margin-left: 23px; }
.panel-ic { width: 22px; height: 22px; margin-left: 26px; }
.me { margin-left: 20px; width: 34px; height: 34px; border-radius: 50%; background: #f4511e; color: #fff; font-size: 17px; text-align: center; line-height: 33px; }
.kebab { margin-left: 9px; width: 45px; height: 45px; border-radius: 50%; border: 3px solid #1a73e8; display: flex; flex-direction: column; align-items: center; justify-content: center; gap: 3px; }
.kebab i { width: 5px; height: 5px; border-radius: 50%; background: #5f6368; }

/* application shell */
.app { height: 892px; flex: none; display: grid; grid-template-columns: 105px 1fr; }
.side { background: #f9f9f9; display: flex; flex-direction: column; color: #00003a; }
.side svg { fill: #00003a; }
.side-top { height: 70px; border-bottom: 1px solid #e3e3e3; display: flex; align-items: center; padding-left: 25px; flex: none; }
.side-search { height: 67px; padding: 24px 0 0 28px; flex: none; }
.side-ic { height: 68.900px; flex: none; display: flex; align-items: center; justify-content: center; padding-right: 10px; }

.head { height: 63px; display: flex; align-items: center; padding: 0 13px 0 21px; }
.logo { width: 40px; height: 36px; stroke: #00003a; margin-top: 1px; }
.logo-bar { width: 3px; height: 30px; background: #00003a; margin-left: 12px; }
.logo-text { margin-left: 13px; width: 160px; font: 15px/16px "Liberation Sans", Arial, sans-serif; color: #00003a; white-space: nowrap; margin-top: 3px; }
.l1 { letter-spacing: -.450px; }
.l2 { letter-spacing: -.250px; }
.locale { margin-left: auto; width: 270px; height: 32px; border: 1px solid #00003a; border-radius: 5px; display: flex; align-items: center; justify-content: space-between; padding: 0 7px 0 5px; font-size: 20px; }
.globe { width: 41px; height: 41px; margin-left: 13px; }
.gear { width: 40px; height: 40px; margin-left: 20px; }
.bell { width: 30px; height: 36px; margin-left: 28px; margin-top: 2px; }
.avatar { margin-left: 17px; width: 47px; height: 48px; margin-top: -4px; border-radius: 50%; background: #f2a007; border: 2px solid #00003a; color: #00003a; font-weight: 700; font-size: 24px; line-height: 39px; text-align: center; }

.crumbs { height: 65px; background: #f9f9f9; padding: 6px 0 0 2px; }
.crumb { width: 159px; height: 49px; background: #fff; border: 1px solid #00003a; border-bottom: 0; border-radius: 12px 12px 0 0; color: #f2a02a; font-size: 20px; line-height: 51px; padding-left: 9px; white-space: nowrap; }

.title-row { height: 92px; display: flex; align-items: flex-start; padding: 25px 31px 0 20px; }
h1 { margin: -1px 0 0; font-size: 31px; font-weight: 500; line-height: 46px; flex: 1; color: #212529; letter-spacing: .1px; -webkit-text-stroke: .5px #212529; }
.switch { width: 65px; height: 32px; border-radius: 16px; border: 1px solid #00003a; background: #fff; padding: 4px; }
.switch i { display: block; width: 22px; height: 22px; border-radius: 50%; background: #00003a; }
.switch.on { background: #00003f; margin-top: 1px; }
.switch.on i { background: #fff; margin-left: 33px; }
.mapic { width: 36px; height: 35px; margin-left: 14px; }

.cards { display: flex; gap: 21px; padding-left: 15px; align-items: flex-start; }
.card { width: 874px; height: 590px; border: 1px solid #cfcfd2; border-radius: 8px; padding-left: 21px; color: #00003a; }
.tools { height: 94px; display: flex; align-items: center; justify-content: flex-end; gap: 20px; padding: 0 34px 11px 0; }
.tools svg:last-child { margin-left: 2px; }
.scroll { display: grid; grid-template-columns: 816px 13px; grid-template-rows: 397px 10px; }
.viewport { overflow: hidden; }
table { width: 816px; table-layout: fixed; border-collapse: collapse; }
.c1 { width: 175px; } .c2 { width: 171px; } .c3 { width: 122px; } .c4 { width: 181px; } .c5 { width: 167px; }
th { height: 55px; background: #00003a; border: 1px solid #000; color: #fff; font-size: 20px; font-weight: 700; text-align: left; padding: 0 0 0 10px; white-space: nowrap; }
td { height: 55px; border-bottom: 1px solid #dee2e6; padding: 0 0 0 10px; font-size: 20px; color: #1c1c50; }
th:first-child, td:first-child { padding-left: 11px; }
td:first-child { letter-spacing: .1px; }
tbody tr:nth-child(odd) { background: #f1f1f1; }
.vbar { height: 134px; border: 2px solid #24478c; border-radius: 7px; background: #00003a; }
.hbar { width: 788px; height: 10px; border: 2px solid #24478c; border-radius: 5px; background: #00003a; }
.pager { display: flex; align-items: center; justify-content: flex-end; height: 34px; margin-top: 32px; padding-right: 53px; font-size: 20.200px; color: #1c1c50; }
.rowsel { width: 68px; height: 33px; margin-left: 6px; border: 1px solid #666; border-radius: 2px; display: flex; align-items: center; justify-content: space-between; padding: 0 8px 0 5px; color: #111; }
.pager svg path { fill: #00003a; }
.rowsel svg { color: #111; }
.prev { margin: 6px 0 0 25px; }
.p1 { margin-left: 20px; } .p2 { margin-left: 12px; } .p3 { margin-left: 12px; }
.next { margin: 6px 0 0 19px; }

.geo { width: 874px; height: 581px; background: #f9f9f9; padding: 0 13px 0 14px; }
.geo-head { height: 81px; display: flex; padding-top: 19px; }
.geo-head span { margin-left: 10px; font-size: 20.200px; line-height: 24px; }
.map { position: relative; width: 847px; height: 488px; border-radius: 25px; overflow: hidden; }
.map-svg { width: 847px; height: 488px; }
.map text { paint-order: stroke; stroke-linejoin: round; text-anchor: middle; }
.map .end { text-anchor: end; }
.state { font: italic 12.900px "Noto Sans", sans-serif; fill: #8d618b; stroke: rgba(255,255,255,.7); stroke-width: 2.500px; }
.city { font: 14.400px "Noto Sans", sans-serif; fill: #333; stroke: rgba(255,255,255,.7); stroke-width: 2.500px; }
.dots { fill: #fff; stroke: #555; stroke-width: 1.200; }
.map-ctl { position: absolute; left: 13px; top: 13px; display: flex; flex-direction: column; gap: 14px; }
.zoom, .full { width: 44px; background: #fff; background-clip: padding-box; border: 2px solid rgba(0,0,0,.22); border-radius: 5px; }
.zoom div { height: 40px; display: grid; place-items: center; }
.zoom div:first-child { border-bottom: 1px solid #ccc; height: 41px; }
.zoom svg { width: 17px; height: 17px; stroke: #000; stroke-width: 2.200; }
.full { height: 44px; display: grid; place-items: center; }
.attr { position: absolute; right: 0; bottom: 0; height: 23px; width: 227px; background: rgba(255,255,255,.8); padding-left: 7px; display: flex; align-items: center; gap: 4px; font: 16px "Liberation Sans", Arial, sans-serif; color: #333; white-space: nowrap; }
.attr a { color: #0078a8; }

/* desktop taskbar */
.task { flex: 1; border-top: 2px solid #b5b5b5; background: #dcdcdc; display: flex; align-items: center; }
.wx { position: relative; margin-left: 12px; width: 44px; }
.wx b { position: absolute; left: 17px; top: -11px; width: 24px; height: 24px; border-radius: 50%; background: #c42b1c; color: #fff; font-size: 15px; line-height: 24px; text-align: center; font-weight: 400; }
.win { width: 35px; height: 35px; margin: 1px 0 0 29px; }
.search { margin-left: 21px; width: 327px; height: 47px; border-radius: 24px; background: #f5f5f5; border: 1px solid #c9c9c9; border-bottom: 2px solid #b5b5b5; display: flex; align-items: center; padding: 0 5px 0 15px; font-size: 19.500px; color: #5a5a5a; }
.search span { margin-left: 15px; flex: 1; }
.apps { margin-left: 4.500px; display: flex; height: 100%; align-items: center; }
.apps div { width: 66px; height: 58px; display: grid; place-items: center; position: relative; }
.apps svg { width: 36px; height: 36px; }
.run::after { content: ""; position: absolute; bottom: -1px; left: 28px; width: 9px; height: 5px; border-radius: 3px; background: #808080; }
.apps .cur { width: 56px; margin: 0 5px; background: #f0f0f0; border-radius: 6px; box-shadow: 0 0 0 1px #d0d0d0; }
.cur::after { left: 16px; width: 24px; background: #0078d4; }
.apps em { position: absolute; left: 30px; top: 4px; width: 24px; height: 24px; border-radius: 50%; background: #f4511e; color: #fff; font: 14px/24px "Open Sans", sans-serif; text-align: center; }
.apps .photo { left: 35px; }
.photo svg { width: 24px; height: 24px; }
.lnv { font: bold 28px "Liberation Sans", sans-serif; fill: #fff; text-anchor: middle; }
.tray { margin-left: auto; display: flex; align-items: center; padding-right: 27px; }
.tray svg { fill: none; stroke: #111; stroke-width: 2; }
.up { width: 16px; height: 10px; }
.sync { width: 26px; height: 26px; margin-left: 27px; }
.mic { width: 18px; height: 25px; margin-left: 26px; }
.lang { width: 60px; margin-left: 19px; text-align: center; font-size: 17px; line-height: 23px; }
.wifi { width: 24px; height: 18px; margin-left: 14px; }
.vol { width: 25px; height: 20px; margin-left: 12px; }
.bat { width: 25px; height: 20px; margin-left: 11px; }
.clock { width: 106px; margin-left: 12px; text-align: right; font-size: 17.300px; line-height: 23px; color: #111; }
.dnd { width: 21px; height: 25px; margin-left: 13px; }
```
